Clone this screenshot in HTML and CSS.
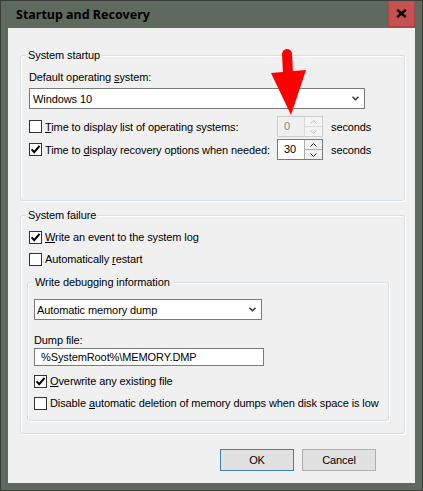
FILE: index.html
```html
<!DOCTYPE html>
<html>
<head>
<meta charset="utf-8">
<title>Startup and Recovery</title>
<link rel="stylesheet" href="styles.css">
</head>
<body>
<div class="window">
  <div class="titlebar">
    <span class="title">Startup and Recovery</span>
    <div class="close">
      <svg width="11" height="9" viewBox="0 0 11 9"><path d="M1.2 0.8 L9.8 8.2 M9.8 0.8 L1.2 8.2" stroke="#000" stroke-width="2.4" fill="none"/></svg>
    </div>
  </div>
  <div class="client">
    <div class="group g1">
      <div class="legend">System startup</div>
      <div class="label">Default operating <u>s</u>ystem:</div>
      <div class="combo combo1">
        <span>Windows 10</span>
        <svg class="chev" width="7" height="5" viewBox="0 0 7 5"><path d="M0.5 0.8 L3.5 3.8 L6.5 0.8" stroke="#333" stroke-width="1.5" fill="none"/></svg>
      </div>
      <div class="row r1">
        <div class="check"><span class="box"></span><span><u>T</u>ime to display list of operating systems:</span></div>
        <div class="spin disabled">
          <span class="val">0</span>
          <div class="arrows">
            <span class="up"><svg width="7" height="4" viewBox="0 0 7 4"><path d="M0.5 3.5 L3.5 0.5 L6.5 3.5" stroke="#bdbdbd" stroke-width="1" fill="none"/></svg></span>
            <span class="dn"><svg width="7" height="4" viewBox="0 0 7 4"><path d="M0.5 0.5 L3.5 3.5 L6.5 0.5" stroke="#bdbdbd" stroke-width="1" fill="none"/></svg></span>
          </div>
        </div>
        <span class="unit">seconds</span>
      </div>
      <div class="row r2">
        <div class="check"><span class="box checked"><svg width="11" height="11" viewBox="0 0 11 11"><path d="M1.6 5.4 L4.2 8.2 L9.6 1.8" stroke="#000" stroke-width="2" fill="none"/></svg></span><span>Time to <u>d</u>isplay recovery options when needed:</span></div>
        <div class="spin">
          <span class="val">30</span>
          <div class="arrows">
            <span class="up"><svg width="7" height="4" viewBox="0 0 7 4"><path d="M0.5 3.5 L3.5 0.5 L6.5 3.5" stroke="#333" stroke-width="1" fill="none"/></svg></span>
            <span class="dn"><svg width="7" height="4" viewBox="0 0 7 4"><path d="M0.5 0.5 L3.5 3.5 L6.5 0.5" stroke="#333" stroke-width="1" fill="none"/></svg></span>
          </div>
        </div>
        <span class="unit">seconds</span>
      </div>
    </div>

    <div class="group g2">
      <div class="legend">System failure</div>
      <div class="check crow c3"><span class="box checked"><svg width="11" height="11" viewBox="0 0 11 11"><path d="M1.6 5.4 L4.2 8.2 L9.6 1.8" stroke="#000" stroke-width="2" fill="none"/></svg></span><span><u>W</u>rite an event to the system log</span></div>
      <div class="check crow c4"><span class="box"></span><span>Automatically <u>r</u>estart</span></div>

      <div class="group g3">
        <div class="legend">Write debugging information</div>
        <div class="combo combo2">
          <span>Automatic memory dump</span>
          <svg class="chev" width="7" height="5" viewBox="0 0 7 5"><path d="M0.5 0.8 L3.5 3.8 L6.5 0.8" stroke="#333" stroke-width="1.5" fill="none"/></svg>
        </div>
        <div class="label dlabel">Dump file:</div>
        <div class="field">%SystemRoot%\MEMORY.DMP</div>
        <div class="check crow c5"><span class="box checked"><svg width="11" height="11" viewBox="0 0 11 11"><path d="M1.6 5.4 L4.2 8.2 L9.6 1.8" stroke="#000" stroke-width="2" fill="none"/></svg></span><span><u>O</u>verwrite any existing file</span></div>
        <div class="check crow c6"><span class="box"></span><span>Disable <u>a</u>utomatic deletion of memory dumps when disk space is low</span></div>
      </div>
    </div>

    <div class="buttons">
      <div class="btn default">OK</div>
      <div class="btn">Cancel</div>
    </div>
  </div>

  <svg class="arrow" width="40" height="70" viewBox="0 0 40 70">
    <path d="M18 6 L19 25" stroke="#ff0000" stroke-width="10" stroke-linecap="round" fill="none"/>
    <polygon points="2,25 37,22 22,67" fill="#ff0000"/>
  </svg>
</div>
</body>
</html>
```

FILE: styles.css
```css
* { box-sizing: border-box; margin: 0; padding: 0; }

html, body {
  margin: 0;
  background: #5f6a5e;
}

body {
  font-family: "Liberation Sans", Arial, sans-serif;
  font-size: 11px;
  letter-spacing: -0.1px;
  line-height: 16px;
  color: #000;
}

u { text-decoration: underline; text-underline-offset: 1px; }

.window {
  position: relative;
  width: 423px;
  height: 491px;
  background: #5f6a5e;
  border: 1px solid #3a3d39;
  padding: 0 7px 7px 7px;
  display: flex;
  flex-direction: column;
}

.titlebar {
  height: 27px;
  flex: none;
  display: flex;
  align-items: flex-start;
  justify-content: space-between;
}

.title {
  font-family: "Noto Sans", "Open Sans", sans-serif;
  font-weight: bold;
  font-size: 12.5px;
  letter-spacing: 0;
  padding-left: 8px;
  line-height: 27px;
  color: #000;
}

.close {
  width: 27px;
  height: 26px;
  background: #c75050;
  border: 1px solid #a44848;
  border-top: none;
  display: flex;
  align-items: center;
  justify-content: center;
}

.client {
  flex: 1;
  background: #f0f0f0;
  padding: 27px 10px 0 12px;
}

.group {
  border: 1px solid #d5dfe5;
  border-radius: 3px;
  box-shadow: inset 1px 1px 0 #fff, 1px 1px 0 #fff;
}

.legend {
  width: fit-content;
  background: #f0f0f0;
  padding: 0 2px;
  margin-top: -9px;
  line-height: 16px;
}

.g1 {
  width: 385px;
  padding: 0 8px 40px 8px;
}
.g1 .legend { margin-left: -3px; }

.label { margin-top: 6px; }

.combo {
  height: 21px;
  background: #fff;
  border: 1px solid #7a7a7a;
  display: flex;
  align-items: center;
  justify-content: space-between;
  padding: 0 5px 0 3px;
}
.combo1 { width: 336px; margin-top: 3px; }
.chev { display: block; }

.row {
  display: grid;
  grid-template-columns: 240px 46px auto;
  column-gap: 8px;
  align-items: center;
  height: 21px;
}
.r1 { margin-top: 7px; }
.r2 { margin-top: 2px; }

.check {
  display: flex;
  align-items: center;
  gap: 3px;
  white-space: nowrap;
}

.box {
  width: 13px;
  height: 13px;
  flex: none;
  background: #fff;
  border: 1px solid #333;
  display: flex;
  align-items: center;
  justify-content: center;
}
.box svg { display: block; }

.spin {
  height: 21px;
  border: 1px solid #7a7a7a;
  background: #fff;
  display: flex;
  align-items: stretch;
}
.spin .val {
  flex: 1;
  padding-left: 6px;
  line-height: 19px;
}
.spin .arrows {
  width: 18px;
  display: flex;
  flex-direction: column;
}
.spin .arrows span {
  flex: 1;
  display: flex;
  align-items: center;
  justify-content: center;
  background: #f0f0f0;
  border-left: 1px solid #acacac;
}
.spin .arrows .up { border-bottom: 1px solid #acacac; }
.spin .arrows svg { display: block; }

.spin.disabled {
  border-color: #cccccc;
  background: #f0f0f0;
  color: #838383;
}
.spin.disabled .arrows span { border-color: #d9d9d9; background: #f4f4f4; }

.g2 {
  width: 385px;
  margin-top: 14px;
  padding: 0 15px 12px 6px;
}
.g2 > .legend { margin-left: -1px; }

.crow { height: 16px; margin-left: 2px; }
.c3 { margin-top: 6px; }
.c4 { margin-top: 6px; }

.g3 {
  width: 362px;
  margin-top: 15px;
  padding: 0 6px 9px 6px;
}
.g3 .legend { margin-left: -1px; }
.g3 .crow { margin-left: 0; }

.combo2 { width: 228px; margin-top: 9px; padding-left: 2px; }
.dlabel { margin-top: 12px; }

.field {
  width: 230px;
  height: 18px;
  background: #fff;
  border: 1px solid #7a7a7a;
  padding-left: 6px;
  line-height: 16px;
}

.c5 { margin-top: 7px; }
.c6 { margin-top: 6px; }

.buttons {
  display: flex;
  justify-content: flex-end;
  gap: 8px;
  margin-top: 15px;
  padding-right: 29px;
}

.btn {
  width: 74px;
  height: 22px;
  background: #e1e1e1;
  border: 1px solid #adadad;
  text-align: center;
  line-height: 20px;
}
.btn.default { border-color: #3c7fb1; }

.arrow {
  position: absolute;
  left: 268px;
  top: 47px;
}
```
